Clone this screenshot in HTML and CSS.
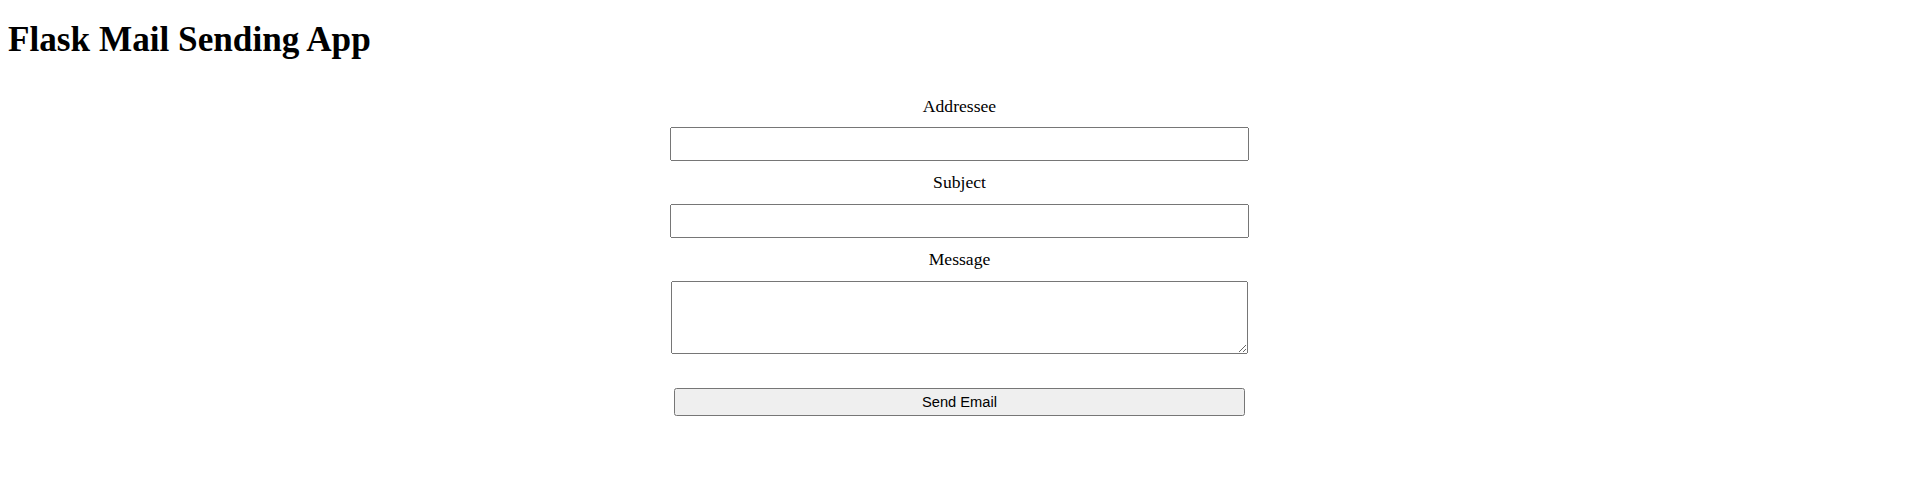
FILE: index.html
```html
<!DOCTYPE html>
<html lang="en">
<head>
    <meta charset="UTF-8">
    <meta name="viewport" content="width=device-width, initial-scale=1.0">
    <title>Flask Mail Sending App</title>
    <link rel="stylesheet" href="styles.css">
</head>
<body>
    <h1>Flask Mail Sending App</h1>
    <form class="mail-form" action="/send" method="post">
        <label for="addressee">Addressee</label>
        <input type="email" id="addressee" name="addressee">
        <label for="subject">Subject</label>
        <input type="text" id="subject" name="subject">
        <label for="message">Message</label>
        <textarea id="message" name="message"></textarea>
        <button type="submit">Send Email</button>
    </form>
</body>
</html>
```

FILE: styles.css
```css
body {
    font-family: "Liberation Serif", "Times New Roman", serif;
    margin: 8px;
}

h1 {
    font-size: 35.2px;
    margin: 12px 0 35.6px;
}

.mail-form {
    display: flex;
    flex-direction: column;
    align-items: center;
    gap: 10.8px;
}

.mail-form label {
    font-size: 17.6px;
}

.mail-form input {
    width: 30%;
    height: 28px;
    padding: 1px 2.5px;
}

.mail-form textarea {
    width: 30%;
    height: 67px;
    padding: 2px 2.5px;
}

.mail-form button {
    width: 30%;
    height: 28px;
    margin-top: 23.6px;
    font-family: "Liberation Sans", Arial, sans-serif;
    font-size: 14.67px;
}
```
